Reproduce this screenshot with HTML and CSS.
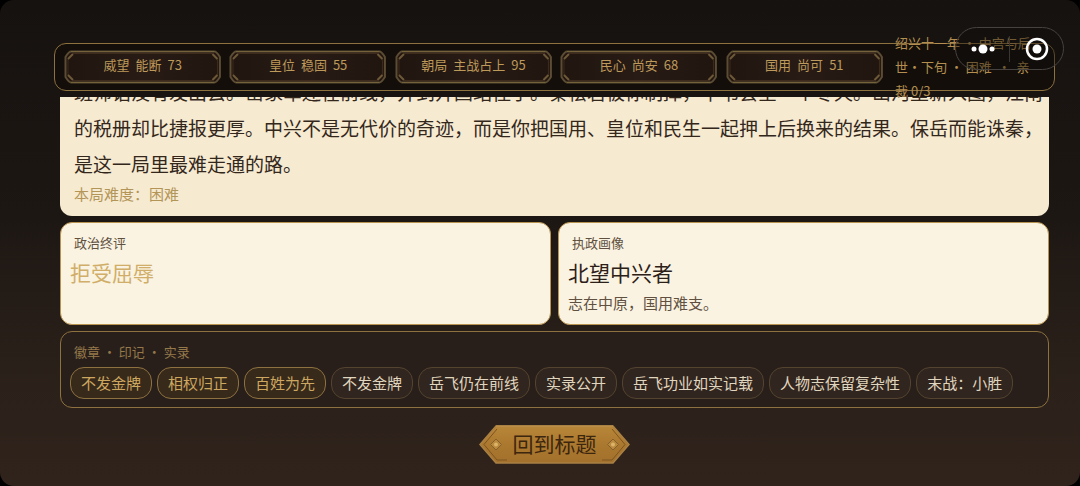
FILE: index.html
```
<!DOCTYPE html>
<html lang="zh-CN">
<head>
    <meta charset="UTF-8">
    <meta name="viewport" content="width=device-width, initial-scale=1.0">
    <title>终局</title>
    <link rel="stylesheet" href="styles.css">
</head>
<body>
    <!-- shared shapes -->
    <svg class="defs" aria-hidden="true">
        <defs>
            <linearGradient id="gold" x1="0" y1="0" x2="0" y2="1">
                <stop offset="0" stop-color="#b98739"/>
                <stop offset="0.5" stop-color="#ab782f"/>
                <stop offset="1" stop-color="#a3712c"/>
            </linearGradient>
            <linearGradient id="plate" x1="0" y1="0" x2="1" y2="0">
                <stop offset="0" stop-color="#20150f"/>
                <stop offset="0.5" stop-color="#281b16"/>
                <stop offset="1" stop-color="#20150f"/>
            </linearGradient>
        </defs>
        <symbol id="frame" viewBox="0 0 158 34" preserveAspectRatio="none">
            <path d="M7 1.500H151Q153 1.500 156.500 7V27Q153 32.500 151 32.500H7Q5 32.500 1.500 27V7Q5 1.500 7 1.500Z" fill="url(#plate)" stroke="#5c4c34" stroke-width="2"/>
            <path d="M7 1.500H151M7 32.500H151" fill="none" stroke="#74623a"/>
            <path d="M9 3.500H149L154 9V25L149 30.500H9L4 25V9Z" fill="none" stroke="#3f2b1d"/>
            <path d="M4 9L9 4M4 25L9 30M154 9L149 4M154 25L149 30" stroke="#6d5838" stroke-width="2"/>
        </symbol>
    </svg>

    <div class="screen">
        <header class="topbar">
            <div class="stat"><svg><use href="#frame"/></svg><span>威望</span><span>能断</span><span>73</span></div>
            <div class="stat"><svg><use href="#frame"/></svg><span>皇位</span><span>稳固</span><span>55</span></div>
            <div class="stat"><svg><use href="#frame"/></svg><span>朝局</span><span>主战占上</span><span>95</span></div>
            <div class="stat"><svg><use href="#frame"/></svg><span>民心</span><span>尚安</span><span>68</span></div>
            <div class="stat"><svg><use href="#frame"/></svg><span>国用</span><span>尚可</span><span>51</span></div>
            <div class="date">绍兴十一年 · 中宫与后世·下旬 · 困难 &nbsp;·&nbsp; 亲裁 0/3</div>
        </header>

        <main class="scroll">
            <section class="story">
                <p>班师诏没有发出去。岳家军还在前线，并到开国站住了。秦桧若被你制掉，中书会空一个冬天。山河重新入图，江南的税册却比捷报更厚。中兴不是无代价的奇迹，而是你把国用、皇位和民生一起押上后换来的结果。保岳而能诛秦，是这一局里最难走通的路。</p>
                <div class="difficulty">本局难度：困难</div>
            </section>

            <div class="cards">
                <section class="card">
                    <div class="label">政治终评</div>
                    <h2 class="verdict">拒受屈辱</h2>
                </section>
                <section class="card">
                    <div class="label">执政画像</div>
                    <h2>北望中兴者</h2>
                    <p>志在中原，国用难支。</p>
                </section>
            </div>

            <section class="badges">
                <div class="label">徽章 · 印记 · 实录</div>
                <div class="tags">
                    <span class="tag gold">不发金牌</span>
                    <span class="tag gold">相权归正</span>
                    <span class="tag gold">百姓为先</span>
                    <span class="tag">不发金牌</span>
                    <span class="tag">岳飞仍在前线</span>
                    <span class="tag">实录公开</span>
                    <span class="tag">岳飞功业如实记载</span>
                    <span class="tag">人物志保留复杂性</span>
                    <span class="tag">末战：小胜</span>
                </div>
            </section>
        </main>

        <footer>
            <button class="back" type="button">
                <svg viewBox="0 0 151 39" aria-hidden="true">
                    <path d="M17 1H134L150 19.500L134 38H17L1 19.500Z" fill="url(#gold)" stroke="#a98043" stroke-width="1.500"/>
                    <path d="M17 1H134" stroke="#c99a4c"/>
                    <path d="M28 35H18L5 19.500L18 4M123 35H133L146 19.500L133 4" fill="none" stroke="#7d5420"/>
                    <g fill="#b98a3e" stroke="#86602b">
                        <path d="M17 14L22.500 19.500L17 25L11.500 19.500Z"/>
                        <path d="M134 14L139.500 19.500L134 25L128.500 19.500Z"/>
                    </g>
                    <circle cx="17" cy="19.500" r="2" fill="#dcb468"/>
                    <circle cx="134" cy="19.500" r="2" fill="#dcb468"/>
                </svg>
                <span>回到标题</span>
            </button>
        </footer>

        <div class="capsule">
            <button type="button" aria-label="更多">
                <svg width="24" height="10" viewBox="0 0 24 10" fill="#fff">
                    <circle cx="3" cy="5" r="2.500"/>
                    <circle cx="12" cy="5" r="4.500"/>
                    <circle cx="21" cy="5" r="2.500"/>
                </svg>
            </button>
            <button type="button" aria-label="关闭">
                <svg width="24" height="24" viewBox="0 0 24 24">
                    <circle cx="12" cy="12" r="10" fill="none" stroke="#fff" stroke-width="2.500"/>
                    <circle cx="12" cy="12" r="4.500" fill="#fff"/>
                </svg>
            </button>
        </div>
    </div>
</body>
</html>
```

FILE: styles.css
```
* { box-sizing: border-box; }
body {
    margin: 0;
    background: #000;
    font-family: "Noto Sans CJK SC", sans-serif;
}
h2, p { margin: 0; font-weight: normal; }
button { font-family: inherit; border: none; background: none; padding: 0; cursor: pointer; }
.defs { position: absolute; width: 0; height: 0; }

.screen {
    position: relative;
    height: 100vh;
    display: flex;
    flex-direction: column;
    padding: 43px 25px 22px 54px;
    border-radius: 14px;
    background: linear-gradient(180deg, #16120f 0%, #1d1713 45%, #2a201a 75%, #30231c 100%);
}

/* top status bar */
.topbar {
    flex: none;
    height: 48px;
    display: flex;
    align-items: center;
    gap: 8px;
    padding: 0 17px 0 9px;
    border: 1px solid #8d713f;
    border-radius: 12px;
    background: #130e0a;
}
.stat {
    position: relative;
    flex: 1;
    height: 34px;
    padding-bottom: 6px;
    display: flex;
    align-items: center;
    justify-content: center;
    gap: 6px;
    font-size: 13px;
    color: #bd995a;
}
.stat svg { position: absolute; inset: 0; width: 100%; height: 100%; }
.stat span { position: relative; }
.date {
    width: 142px;
    margin-left: 4px;
    font-size: 13px;
    line-height: 24px;
    color: #b38e50;
}

/* scrolled content */
.scroll {
    flex: 1;
    min-height: 0;
    margin: 6px 6px 0 6px;
    overflow: hidden;
    display: flex;
    flex-direction: column;
    justify-content: flex-end;
    gap: 6px;
}
.story {
    flex: none;
    padding: 10px 5px 10px 14px;
    border-radius: 12px;
    background: #f6ead0;
    color: #33271c;
}
.story p { font-size: 19px; line-height: 36px; }
.difficulty { font-size: 15px; line-height: 24px; color: #b39558; }

.cards { flex: none; display: flex; gap: 7px; }
.card {
    flex: 1;
    padding: 9px 9px 8px;
    border: 1px solid #b8934f;
    border-radius: 12px;
    background: #faf3e2;
    color: #5f5040;
}
.label { padding-left: 4px; font-size: 13px; line-height: 22px; }
.card h2 { font-size: 21px; line-height: 36px; color: #2c2118; }
.card h2.verdict { color: #d0ae69; }
.card p { font-size: 15px; line-height: 26px; }

.badges {
    flex: none;
    padding: 9px 9px 8px;
    border: 1px solid #8d713f;
    border-radius: 12px;
    background: #291f1a;
}
.badges .label { color: #94794a; }
.tags { display: flex; flex-wrap: wrap; gap: 5px; margin-top: 4px; }
.tag {
    padding: 0 10px;
    border: 1px solid #54432e;
    border-radius: 14px;
    background: #30261f;
    font-size: 15px;
    line-height: 30px;
    color: #e0d5be;
}
.tag.gold { border-color: #8d713f; background: #382a1b; color: #cda75f; }

footer { flex: none; padding-top: 17px; }
.back {
    position: relative;
    display: block;
    width: 151px;
    height: 39px;
    margin: 0 auto;
    padding-bottom: 3px;
    font-size: 21px;
    color: #3d260e;
}
.back svg { position: absolute; inset: 0; }
.back span { position: relative; }

/* mini program capsule */
.capsule {
    position: absolute;
    top: 27px;
    right: 16px;
    width: 109px;
    height: 43px;
    display: flex;
    align-items: center;
    border: 1px solid #454240;
    border-radius: 22px;
    background: rgba(15, 12, 10, 0.4);
}
.capsule button { flex: 1; display: flex; align-items: center; justify-content: center; height: 26px; }
.capsule button + button { border-left: 1px solid #3a3633; }
```
